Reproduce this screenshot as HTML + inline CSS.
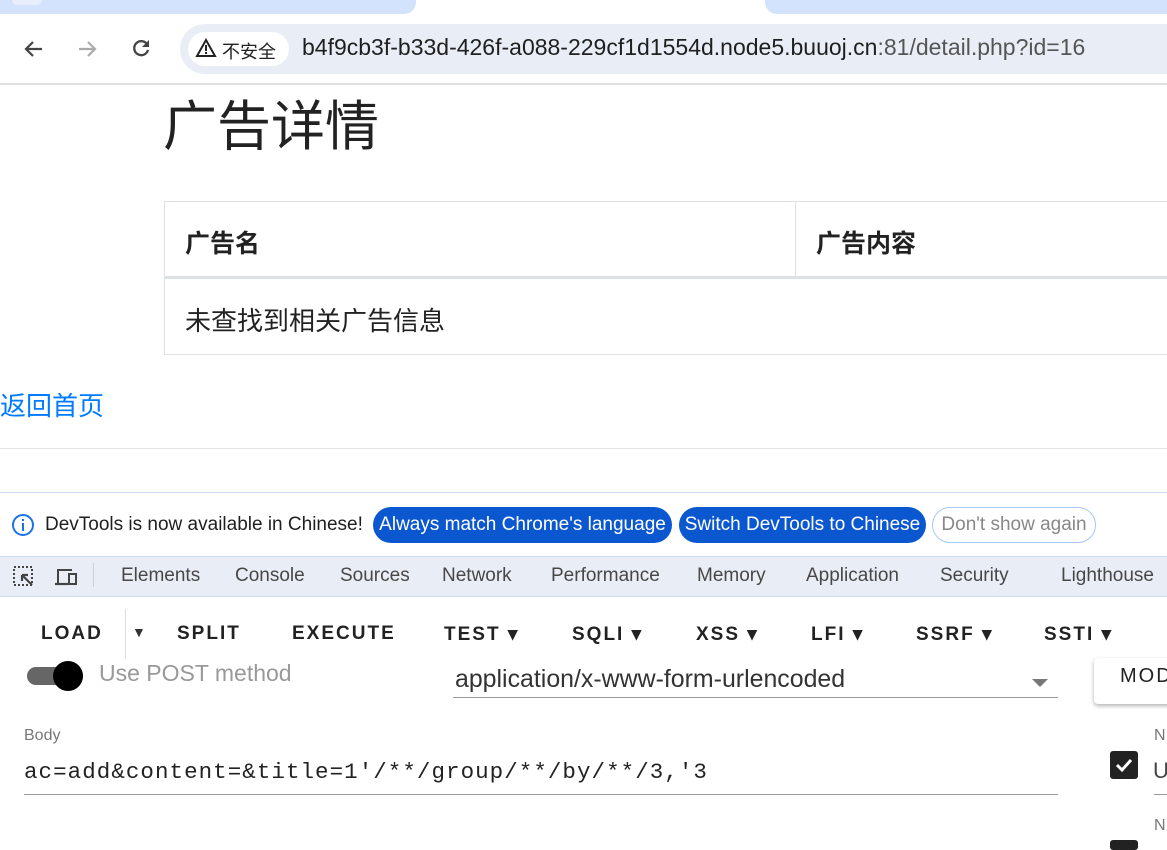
<!DOCTYPE html>
<html><head><meta charset="utf-8"><style>
*{margin:0;padding:0;box-sizing:border-box}
body{width:1167px;height:844px;overflow:hidden;background:#fff;font-family:"Liberation Sans","Noto Sans CJK SC",sans-serif;position:relative;color:#222}
.a{position:absolute;white-space:nowrap}
</style></head><body>
<div class="a" style="left:0;top:0;width:1167px;height:14px;background:#fff"></div>
<div class="a" style="left:0;top:0;width:416px;height:14px;background:#d3e3fd;border-radius:0 0 12px 0"></div>
<div class="a" style="left:12px;top:0;width:30px;height:5px;background:#e8eefb;border-radius:0 0 6px 6px"></div>
<div class="a" style="left:765px;top:0;width:402px;height:14px;background:#d3e3fd;border-radius:0 0 0 12px"></div>
<svg class="a" style="left:22px;top:37px" width="24" height="24" viewBox="0 0 24 24"><path d="M20 12H5M11 5l-7 7 7 7" stroke="#444" stroke-width="2.2" fill="none"/></svg>
<svg class="a" style="left:75px;top:37px" width="24" height="24" viewBox="0 0 24 24"><path d="M4 12h15M13 5l7 7-7 7" stroke="#aaa" stroke-width="2.2" fill="none"/></svg>
<svg class="a" style="left:129px;top:36px" width="24" height="24" viewBox="0 0 24 24"><path d="M18.5 9A7 7 0 1 0 19 14" stroke="#444" stroke-width="2.3" fill="none"/><path d="M20 4v7h-7z" fill="#444"/></svg>
<div class="a" style="left:180px;top:24px;width:987px;height:50px;background:#e9eef6;border-radius:25px 0 0 25px"></div>
<div class="a" style="left:188px;top:32px;width:101px;height:34px;background:#fff;border-radius:17px"></div>
<svg class="a" style="left:195px;top:38px" width="22" height="20" viewBox="0 0 22 20"><path d="M11 2L20 18H2Z" stroke="#222" stroke-width="2" fill="none"/><rect x="10" y="7" width="2" height="6" fill="#222"/><rect x="10" y="14" width="2" height="2" fill="#222"/></svg>
<div class="a" style="left:222px;top:38px;font-size:18px;color:#222">不安全</div>
<div class="a" style="left:302px;top:34px;font-size:23px;color:#1f1f1f">b4f9cb3f-b33d-426f-a088-229cf1d1554d.node5.buuoj.cn<span style="color:#555">:81/detail.php?id=16</span></div>
<div class="a" style="left:0;top:83px;width:1167px;height:2px;background:#e0e0e0"></div>
<div class="a" style="left:163px;top:82px;font-size:54px;color:#222">广告详情</div>
<div class="a" style="left:164px;top:201px;width:1010px;height:154px;border:1px solid #dee2e6"></div>
<div class="a" style="left:164px;top:276px;width:1010px;height:3px;background:#dee2e6"></div>
<div class="a" style="left:795px;top:201px;width:1px;height:76px;background:#dee2e6"></div>
<div class="a" style="left:185px;top:224px;font-size:25px;font-weight:bold">广告名</div>
<div class="a" style="left:816px;top:224px;font-size:25px;font-weight:bold">广告内容</div>
<div class="a" style="left:185px;top:301px;font-size:26px">未查找到相关广告信息</div>
<div class="a" style="left:0;top:386px;font-size:26px;color:#007bff">返回首页</div>
<div class="a" style="left:0;top:448px;width:1167px;height:1px;background:#e5e5e5"></div>
<div class="a" style="left:0;top:492px;width:1167px;height:1px;background:#cfdcf5"></div>
<svg class="a" style="left:11px;top:513px" width="24" height="24" viewBox="0 0 24 24"><circle cx="12" cy="12" r="10" stroke="#1a73e8" stroke-width="2" fill="none"/><rect x="11" y="10" width="2" height="8" fill="#1a73e8"/><rect x="11" y="6" width="2" height="2" fill="#1a73e8"/></svg>
<div class="a" style="left:45px;top:514px;font-size:19px;color:#1f1f1f">DevTools is now available in Chinese!</div>
<div class="a" style="left:373px;top:507px;width:299px;height:36px;background:#0b57d0;border-radius:18px;color:#fff;font-size:19px;line-height:36px;text-align:center">Always match Chrome's language</div>
<div class="a" style="left:679px;top:507px;width:247px;height:36px;background:#0b57d0;border-radius:18px;color:#fff;font-size:19px;line-height:36px;text-align:center">Switch DevTools to Chinese</div>
<div class="a" style="left:932px;top:507px;width:164px;height:36px;border:1px solid #a8c7fa;border-radius:18px;color:#888;font-size:19px;line-height:34px;text-align:center">Don't show again</div>
<div class="a" style="left:0;top:556px;width:1167px;height:41px;background:#e9eef6;border-top:1px solid #cfdcf5;border-bottom:1px solid #cfdcf5"></div>
<svg class="a" style="left:12px;top:565px" width="24" height="24" viewBox="0 0 24 24"><rect x="2" y="2" width="18" height="18" stroke="#444" stroke-width="2" stroke-dasharray="2 2" fill="none"/><path d="M10 10l10 10M10 10h6M10 10v6" stroke="#444" stroke-width="2.2" fill="none"/></svg>
<svg class="a" style="left:54px;top:565px" width="26" height="24" viewBox="0 0 26 24"><path d="M4 18V5h14" stroke="#444" stroke-width="2" fill="none"/><path d="M1 19h13" stroke="#444" stroke-width="2.2"/><rect x="15" y="9" width="7" height="10" stroke="#444" stroke-width="2" fill="none"/></svg>
<div class="a" style="left:93px;top:563px;width:1px;height:24px;background:#c8d0dc"></div>
<div class="a" style="top:565px;font-size:19px;color:#474747;left:0;width:1167px">
<span class="a" style="left:121px">Elements</span><span class="a" style="left:235px">Console</span><span class="a" style="left:340px">Sources</span><span class="a" style="left:442px">Network</span><span class="a" style="left:551px">Performance</span><span class="a" style="left:697px">Memory</span><span class="a" style="left:806px">Application</span><span class="a" style="left:940px">Security</span><span class="a" style="left:1061px">Lighthouse</span></div>
<div class="a" style="top:623px;left:0;width:1167px;font-size:19px;font-weight:bold;letter-spacing:2px;color:#222;font-family:'Liberation Sans',sans-serif">
<span class="a" style="left:41px">LOAD</span><span class="a" style="left:177px">SPLIT</span><span class="a" style="left:292px">EXECUTE</span><span class="a" style="left:444px">TEST ▾</span><span class="a" style="left:572px">SQLI ▾</span><span class="a" style="left:696px">XSS ▾</span><span class="a" style="left:811px">LFI ▾</span><span class="a" style="left:916px">SSRF ▾</span><span class="a" style="left:1044px">SSTI ▾</span></div>
<div class="a" style="left:125px;top:609px;width:1px;height:50px;background:#ddd"></div>
<div class="a" style="left:132px;top:624px;font-size:14px;color:#333">▼</div>
<div class="a" style="left:27px;top:667px;width:56px;height:18px;background:#666;border-radius:9px"></div>
<div class="a" style="left:53px;top:661px;width:30px;height:30px;background:#000;border-radius:50%"></div>
<div class="a" style="left:99px;top:660px;font-size:23px;color:#999">Use POST method</div>
<div class="a" style="left:455px;top:665px;font-size:24.9px;color:#333">application/x-www-form-urlencoded</div>
<div class="a" style="left:1032px;top:679px;width:0;height:0;border-left:8px solid transparent;border-right:8px solid transparent;border-top:8px solid #777"></div>
<div class="a" style="left:453px;top:697px;width:605px;height:1px;background:#999"></div>
<div class="a" style="left:1094px;top:658px;width:80px;height:46px;background:#fff;border-radius:4px;box-shadow:0 2px 4px rgba(0,0,0,.3)"></div>
<div class="a" style="left:1120px;top:665px;font-size:20px;letter-spacing:2px;color:#222">MOD</div>
<div class="a" style="left:24px;top:727px;font-size:16px;color:#777">Body</div>
<div class="a" style="left:24px;top:759px;font-size:22.5px;color:#222;font-family:'Liberation Mono',monospace;letter-spacing:1.05px">ac=add&amp;content=&amp;title=1'/**/group/**/by/**/3,'3</div>
<div class="a" style="left:24px;top:794px;width:1034px;height:1px;background:#999"></div>
<div class="a" style="left:1154px;top:727px;font-size:16px;color:#777">N</div>
<div class="a" style="left:1110px;top:751px;width:28px;height:28px;background:#222;border-radius:3px"></div>
<svg class="a" style="left:1113px;top:754px" width="22" height="22" viewBox="0 0 22 22"><path d="M4 11l5 5 9-10" stroke="#fff" stroke-width="3" fill="none"/></svg>
<div class="a" style="left:1153px;top:758px;font-size:22px;color:#444">U</div>
<div class="a" style="left:1154px;top:794px;width:13px;height:1px;background:#999"></div>
<div class="a" style="left:1154px;top:817px;font-size:16px;color:#777">N</div>
<div class="a" style="left:1110px;top:840px;width:28px;height:10px;background:#222;border-radius:3px"></div>
</body></html>
